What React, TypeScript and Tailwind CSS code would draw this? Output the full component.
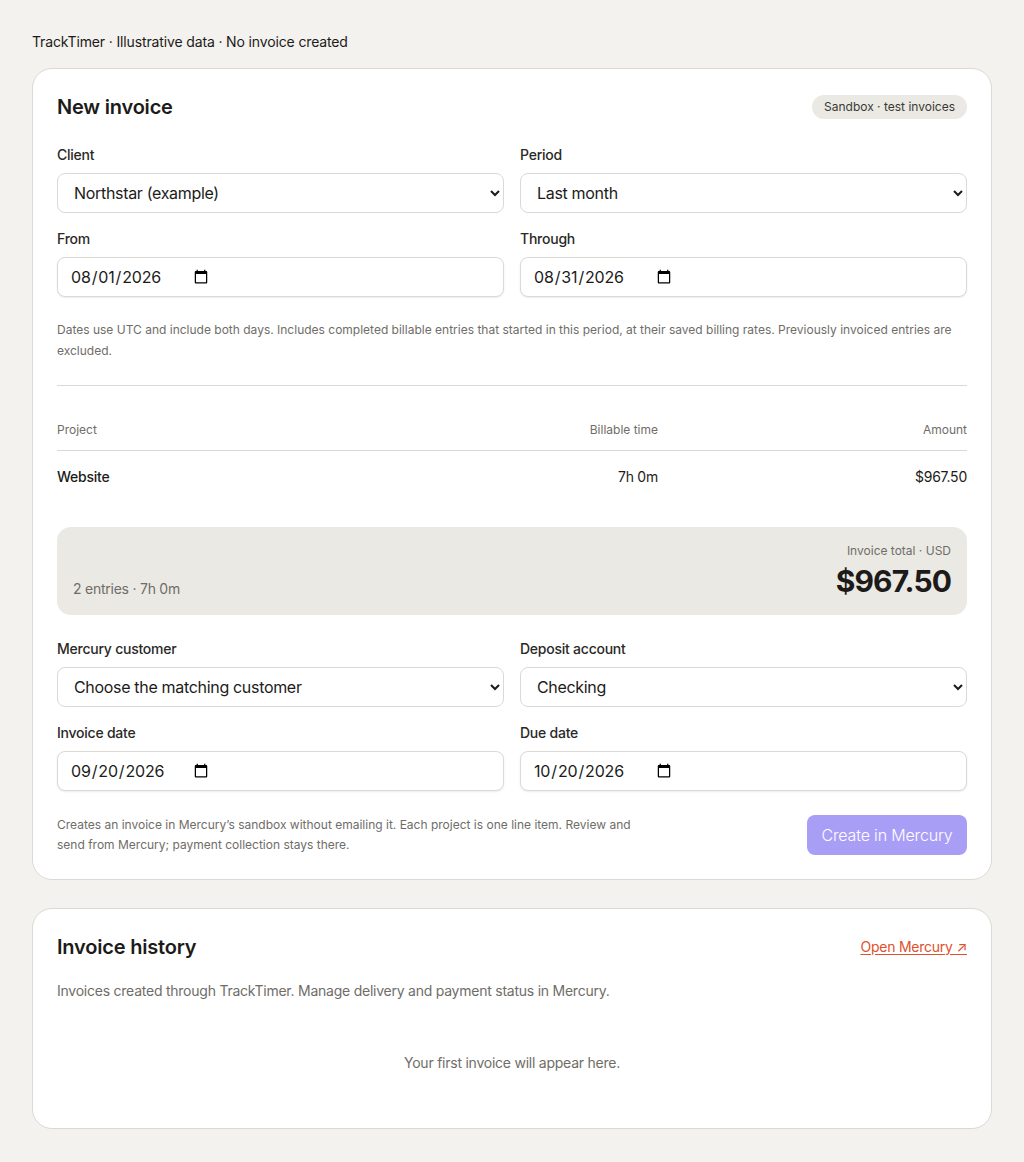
import React from "react";

const font = { fontFamily: "Inter, 'Liberation Sans', sans-serif" };

function Field({ label, children }: { label: string; children: React.ReactNode }) {
  return (
    <label className="flex flex-col">
      <span className="mb-2 text-sm leading-5 font-medium text-[#2a2926]">{label}</span>
      {children}
    </label>
  );
}

function Select({ value, options }: { value: string; options: string[] }) {
  return (
    <select
      defaultValue={value}
      className="h-10 w-full rounded-lg border border-[#dcd9d2] bg-white px-3 text-base tracking-[-0.02em] text-[#1c1b19]"
      style={font}
    >
      {options.map((o) => (
        <option key={o}>{o}</option>
      ))}
    </select>
  );
}

function DateInput({ value }: { value: string }) {
  return (
    <input
      type="date"
      defaultValue={value}
      className="h-10 w-full rounded-lg border border-[#dcd9d2] bg-white px-3 text-base tracking-[-0.01em] text-[#1c1b19] shadow-[0_1px_2px_rgba(0,0,0,0.08)] [&::-webkit-datetime-edit]:flex-none"
      style={font}
    />
  );
}

export default function App() {
  return (
    <div className="min-h-screen bg-[#f3f2ee] px-8 pt-8 pb-8 tracking-[-0.015em] text-[#1c1b19]" style={font}>
      <p className="text-sm leading-5 tracking-[-0.01em] text-[#1c1b19]">
        TrackTimer · Illustrative data · No invoice created
      </p>

      <section className="mt-4 rounded-[20px] border border-[#dcd9d2] bg-white p-6">
        <div className="flex items-center justify-between">
          <h1 className="text-xl leading-7 font-semibold tracking-[-0.01em] text-[#1c1b19]">New invoice</h1>
          <span className="rounded-full bg-[#ebe9e4] px-3 py-1 text-xs leading-4 tracking-normal text-[#3a3935]">
            Sandbox · test invoices
          </span>
        </div>

        <div className="mt-6 grid grid-cols-2 gap-x-4 gap-y-4">
          <Field label="Client">
            <Select value="Northstar (example)" options={["Northstar (example)"]} />
          </Field>
          <Field label="Period">
            <Select value="Last month" options={["Last month", "This month", "Custom"]} />
          </Field>
          <Field label="From">
            <DateInput value="2026-08-01" />
          </Field>
          <Field label="Through">
            <DateInput value="2026-08-31" />
          </Field>
        </div>

        <p className="mt-[22px] text-xs leading-[21px] tracking-normal text-[#6f6d68]">
          Dates use UTC and include both days. Includes completed billable entries that started in this period, at
          their saved billing rates. Previously invoiced entries are excluded.
        </p>

        <div className="mt-6 border-t border-[#dcd9d2]" />

        <div className="mt-[36px]">
          <div className="grid grid-cols-[1fr_200px_309px] border-b border-[#dcd9d2] pb-[12px] text-xs leading-4 tracking-normal text-[#6f6d68]">
            <span>Project</span>
            <span className="text-right">Billable time</span>
            <span className="text-right">Amount</span>
          </div>
          <div className="grid grid-cols-[1fr_200px_309px] py-4 text-sm leading-5">
            <span className="font-medium text-[#1c1b19]">Website</span>
            <span className="text-right text-[#1c1b19]">7h 0m</span>
            <span className="text-right text-[#1c1b19]">$967.50</span>
          </div>
        </div>

        <div className="mt-6 flex items-end justify-between rounded-[14px] bg-[#ebe9e4] p-4">
          <span className="text-sm leading-5 text-[#6f6d68]">2 entries · 7h 0m</span>
          <div className="text-right">
            <div className="text-xs leading-4 tracking-normal text-[#6f6d68]">Invoice total · USD</div>
            <div className="mt-1 text-3xl leading-9 font-bold tracking-[-0.03em] text-[#1c1b19]">$967.50</div>
          </div>
        </div>

        <div className="mt-6 grid grid-cols-2 gap-x-4 gap-y-4">
          <Field label="Mercury customer">
            <Select value="Choose the matching customer" options={["Choose the matching customer"]} />
          </Field>
          <Field label="Deposit account">
            <Select value="Checking" options={["Checking", "Savings"]} />
          </Field>
          <Field label="Invoice date">
            <DateInput value="2026-09-20" />
          </Field>
          <Field label="Due date">
            <DateInput value="2026-10-20" />
          </Field>
        </div>

        <div className="mt-6 flex items-start justify-between gap-6">
          <p className="max-w-[580px] text-xs leading-5 tracking-normal text-[#6f6d68]">
            Creates an invoice in Mercury’s sandbox without emailing it. Each project is one line item. Review and
            send from Mercury; payment collection stays there.
          </p>
          <button
            disabled
            className="h-10 w-40 shrink-0 rounded-lg bg-[#a99ef6] text-base font-light tracking-[-0.01em] text-white"
            style={font}
          >
            Create in Mercury
          </button>
        </div>
      </section>

      <section className="mt-7 rounded-[20px] border border-[#dcd9d2] bg-white p-6">
        <div className="flex items-center justify-between">
          <h2 className="text-xl leading-7 font-semibold tracking-[-0.01em] text-[#1c1b19]">Invoice history</h2>
          <a href="#" className="text-sm leading-5 text-[#e0502b] underline underline-offset-2">
            Open Mercury ↗
          </a>
        </div>
        <p className="mt-5 text-sm leading-5 text-[#6f6d68]">
          Invoices created through TrackTimer. Manage delivery and payment status in Mercury.
        </p>
        <p className="pt-[52px] pb-[31px] text-center text-sm leading-5 text-[#6f6d68]">
          Your first invoice will appear here.
        </p>
      </section>
    </div>
  );
}
